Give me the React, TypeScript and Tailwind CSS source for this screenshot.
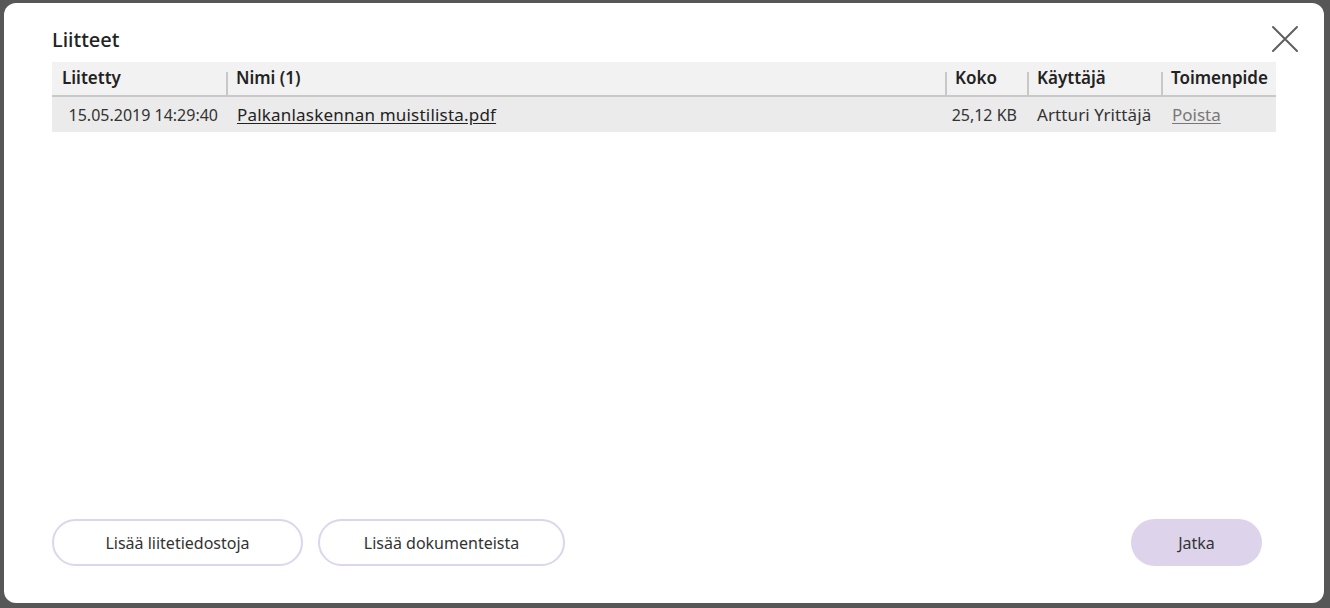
import React from 'react';

const font = { fontFamily: '"Noto Sans", "Open Sans", sans-serif' };

const columns = [
  { label: 'Liitetty', width: 'w-[174px]', divider: false },
  { label: 'Nimi (1)', width: 'flex-1', divider: true },
  { label: 'Koko', width: 'w-[82px]', divider: true },
  { label: 'Käyttäjä', width: 'w-[134px]', divider: true },
  { label: 'Toimenpide', width: 'w-[115px]', divider: true },
];

const CloseIcon = () => (
  <svg width="28" height="28" viewBox="0 0 28 28" fill="none">
    <path d="M2 2 L26 26 M26 2 L2 26" stroke="#5f5f5f" strokeWidth="2" strokeLinecap="round" />
  </svg>
);

const App: React.FC = () => {
  return (
    <div className="w-[1330px] h-[608px] bg-[#575757] pt-[3px] pl-[4px] overflow-hidden" style={font}>
      <div className="relative w-[1320px] h-[600px] bg-white rounded-[12px] flex flex-col pl-[48px] pr-[48px] pt-[23px] pb-[37px]">
        {/* Close */}
        <button className="absolute right-[25px] top-[22px] p-0">
          <CloseIcon />
        </button>

        <h2 className="text-[20px] leading-[28px] font-medium text-[#222] h-[36px]">Liitteet</h2>

        {/* Table */}
        <div className="w-full">
          <div className="flex h-[35px] bg-[#f2f2f2] border-b-2 border-[#c8c8c8]">
            {columns.map(c => (
              <div key={c.label} className={`${c.width} relative flex items-center`}>
                {c.divider && <div className="absolute left-0 bottom-0 h-[23px] w-[2px] bg-[#c8c8c8]" />}
                <span className="pl-[10px] text-[17px] font-semibold text-[#222] leading-none pb-[3px]">{c.label}</span>
              </div>
            ))}
          </div>
          <div className="flex h-[35px] bg-[#ebebeb] items-center text-[17px] text-[#333]">
            <div className="w-[174px] text-right pr-[8px] text-[16px]">15.05.2019 14:29:40</div>
            <div className="flex-1 pl-[11px]">
              <a className="underline underline-offset-2 text-[#222] tracking-[0.2px] cursor-pointer">Palkanlaskennan muistilista.pdf</a>
            </div>
            <div className="w-[82px] text-right pr-[10px] text-[16px]">25,12 KB</div>
            <div className="w-[134px] pl-[10px] whitespace-nowrap tracking-[0.1px]">Artturi Yrittäjä</div>
            <div className="w-[115px] pl-[11px]">
              <a className="underline underline-offset-2 text-[#777] cursor-pointer">Poista</a>
            </div>
          </div>
        </div>

        <div className="flex-1" />

        {/* Footer buttons */}
        <div className="flex items-center">
          <button className="w-[251px] h-[47px] rounded-full border-2 border-[#ddd5ec] bg-white text-[16px] text-[#333]">
            Lisää liitetiedostoja
          </button>
          <button className="ml-[15px] w-[247px] h-[47px] rounded-full border-2 border-[#ddd5ec] bg-white text-[16px] text-[#333]">
            Lisää dokumenteista
          </button>
          <div className="flex-1" />
          <button className="mr-[14px] w-[131px] h-[47px] rounded-full bg-[#ddd4eb] text-[16px] text-[#333]">
            Jatka
          </button>
        </div>
      </div>
    </div>
  );
};

export default App;
